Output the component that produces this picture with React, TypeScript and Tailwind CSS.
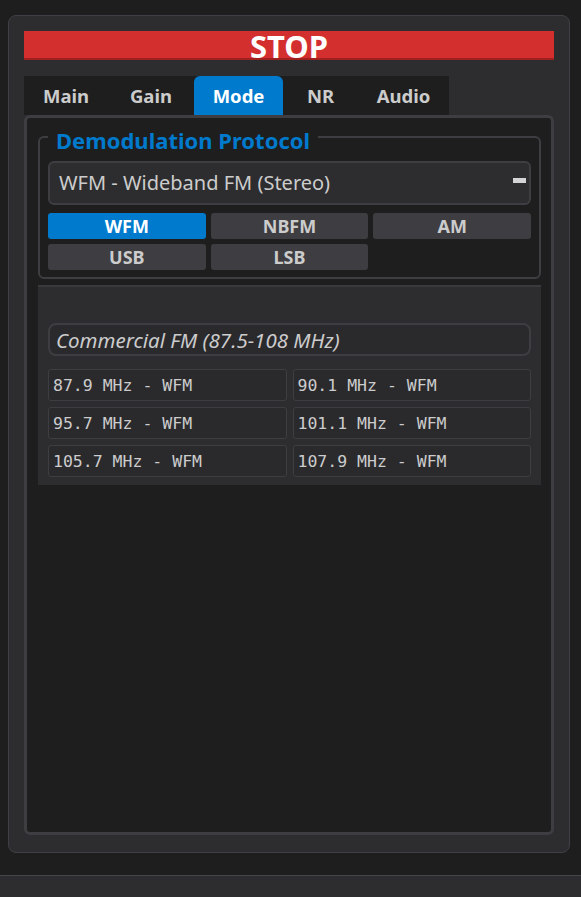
import React, { useState } from 'react';

// Radio control panel: STOP bar, tabs and the demodulation page
const TABS = [
  { name: 'Main', width: 'w-[84px]' },
  { name: 'Gain', width: 'w-[86px]' },
  { name: 'Mode', width: 'w-[89px]' },
  { name: 'NR', width: 'w-[75px]' },
  { name: 'Audio', width: 'w-[91px]' },
];

const MODES = ['WFM', 'NBFM', 'AM', 'USB', 'LSB'];

const PRESETS = [
  '87.9 MHz - WFM',
  '90.1 MHz - WFM',
  '95.7 MHz - WFM',
  '101.1 MHz - WFM',
  '105.7 MHz - WFM',
  '107.9 MHz - WFM',
];

const App: React.FC = () => {
  const [tab, setTab] = useState('Mode');
  const [mode, setMode] = useState('WFM');

  return (
    <div className="w-[581px] h-[897px] bg-[#1e1e1e] flex flex-col font-['Noto_Sans',sans-serif] text-[#cccccc] overflow-hidden">
      <div className="pt-[15px] pl-[8px]">
        <div className="w-[562px] h-[838px] rounded-lg border border-[#3f3f46] bg-[#2d2d30] px-[15px] pt-[15px] flex flex-col">
          {/* Stop button */}
          <button className="h-[29px] w-full bg-[#d32f2f] border-b-2 border-[#a02020] text-white font-bold text-[31px] leading-none flex items-center justify-center">
            <span className="mt-[4px]">STOP</span>
          </button>

          {/* Tabs */}
          <div className="mt-[16px] flex h-[39px] w-[425px] bg-[#1e1e1e]">
            {TABS.map((t) => (
              <button
                key={t.name}
                onClick={() => setTab(t.name)}
                className={`${t.width} h-full flex items-center justify-center font-bold text-[18.5px] rounded-t-md ${
                  tab === t.name ? 'bg-[#007acc] text-white' : 'text-[#cccccc]'
                }`}
              >
                {t.name}
              </button>
            ))}
          </div>

          {/* Tab content */}
          <div className="h-[720px] border-[3px] border-[#3e3e42] rounded-md bg-[#1e1e1e] pl-[11px] pr-[10px] pt-[7px]">
            <fieldset className="border-2 border-[#3e3e42] rounded-md px-[8px] pb-[7px]">
              <legend className="px-[8px] text-[#007acc] font-bold text-[22px] leading-[24px]">
                <span className="relative top-[3px]">Demodulation Protocol</span>
              </legend>
              <div className="mt-[12px] h-[44px] rounded-md border-2 border-[#3e3e42] bg-[#2d2d30] flex items-center justify-between pl-[9px] pr-[3px]">
                <span className="text-[20px]">WFM - Wideband FM (Stereo)</span>
                <span className="w-[13px] h-[5px] bg-[#d4d4d4] -mt-[6px]" />
              </div>
              <div className="mt-[8px] grid grid-cols-3 gap-x-[5px] gap-y-[5px]">
                {MODES.map((m) => (
                  <button
                    key={m}
                    onClick={() => setMode(m)}
                    className={`h-[26px] rounded-[3px] font-bold text-[18px] leading-none flex items-center justify-center ${
                      mode === m ? 'bg-[#007acc] text-white' : 'bg-[#3e3e42] text-[#cccccc]'
                    }`}
                  >
                    {m}
                  </button>
                ))}
              </div>
            </fieldset>

            {/* Presets */}
            <div className="mt-[6px] border-t-2 border-[#3a3a3e] bg-[#2d2d30] px-[10px] pt-[36px] pb-[8px]">
              <div className="h-[33px] rounded-lg border-2 border-[#3e3e42] bg-[#2a2a2d] flex items-center px-[6px]">
                <span className="italic text-[20.5px] text-[#cccccc] mt-[2px]">Commercial FM (87.5-108 MHz)</span>
              </div>
              <div className="mt-[13px] grid grid-cols-2 gap-[6px]">
                {PRESETS.map((p) => (
                  <div
                    key={p}
                    className="h-[32px] rounded-[3px] border border-[#3e3e42] bg-[#2a2a2d] flex items-center px-[4px] pt-[2px] font-['DejaVu_Sans_Mono',monospace] text-[16.5px] text-[#cccccc]"
                  >
                    {p}
                  </div>
                ))}
              </div>
            </div>
          </div>
        </div>
      </div>

      {/* Status bar */}
      <div className="mt-[22px] flex-1 border-t border-[#45454a] bg-[#2d2d30]" />
    </div>
  );
};

export default App;
